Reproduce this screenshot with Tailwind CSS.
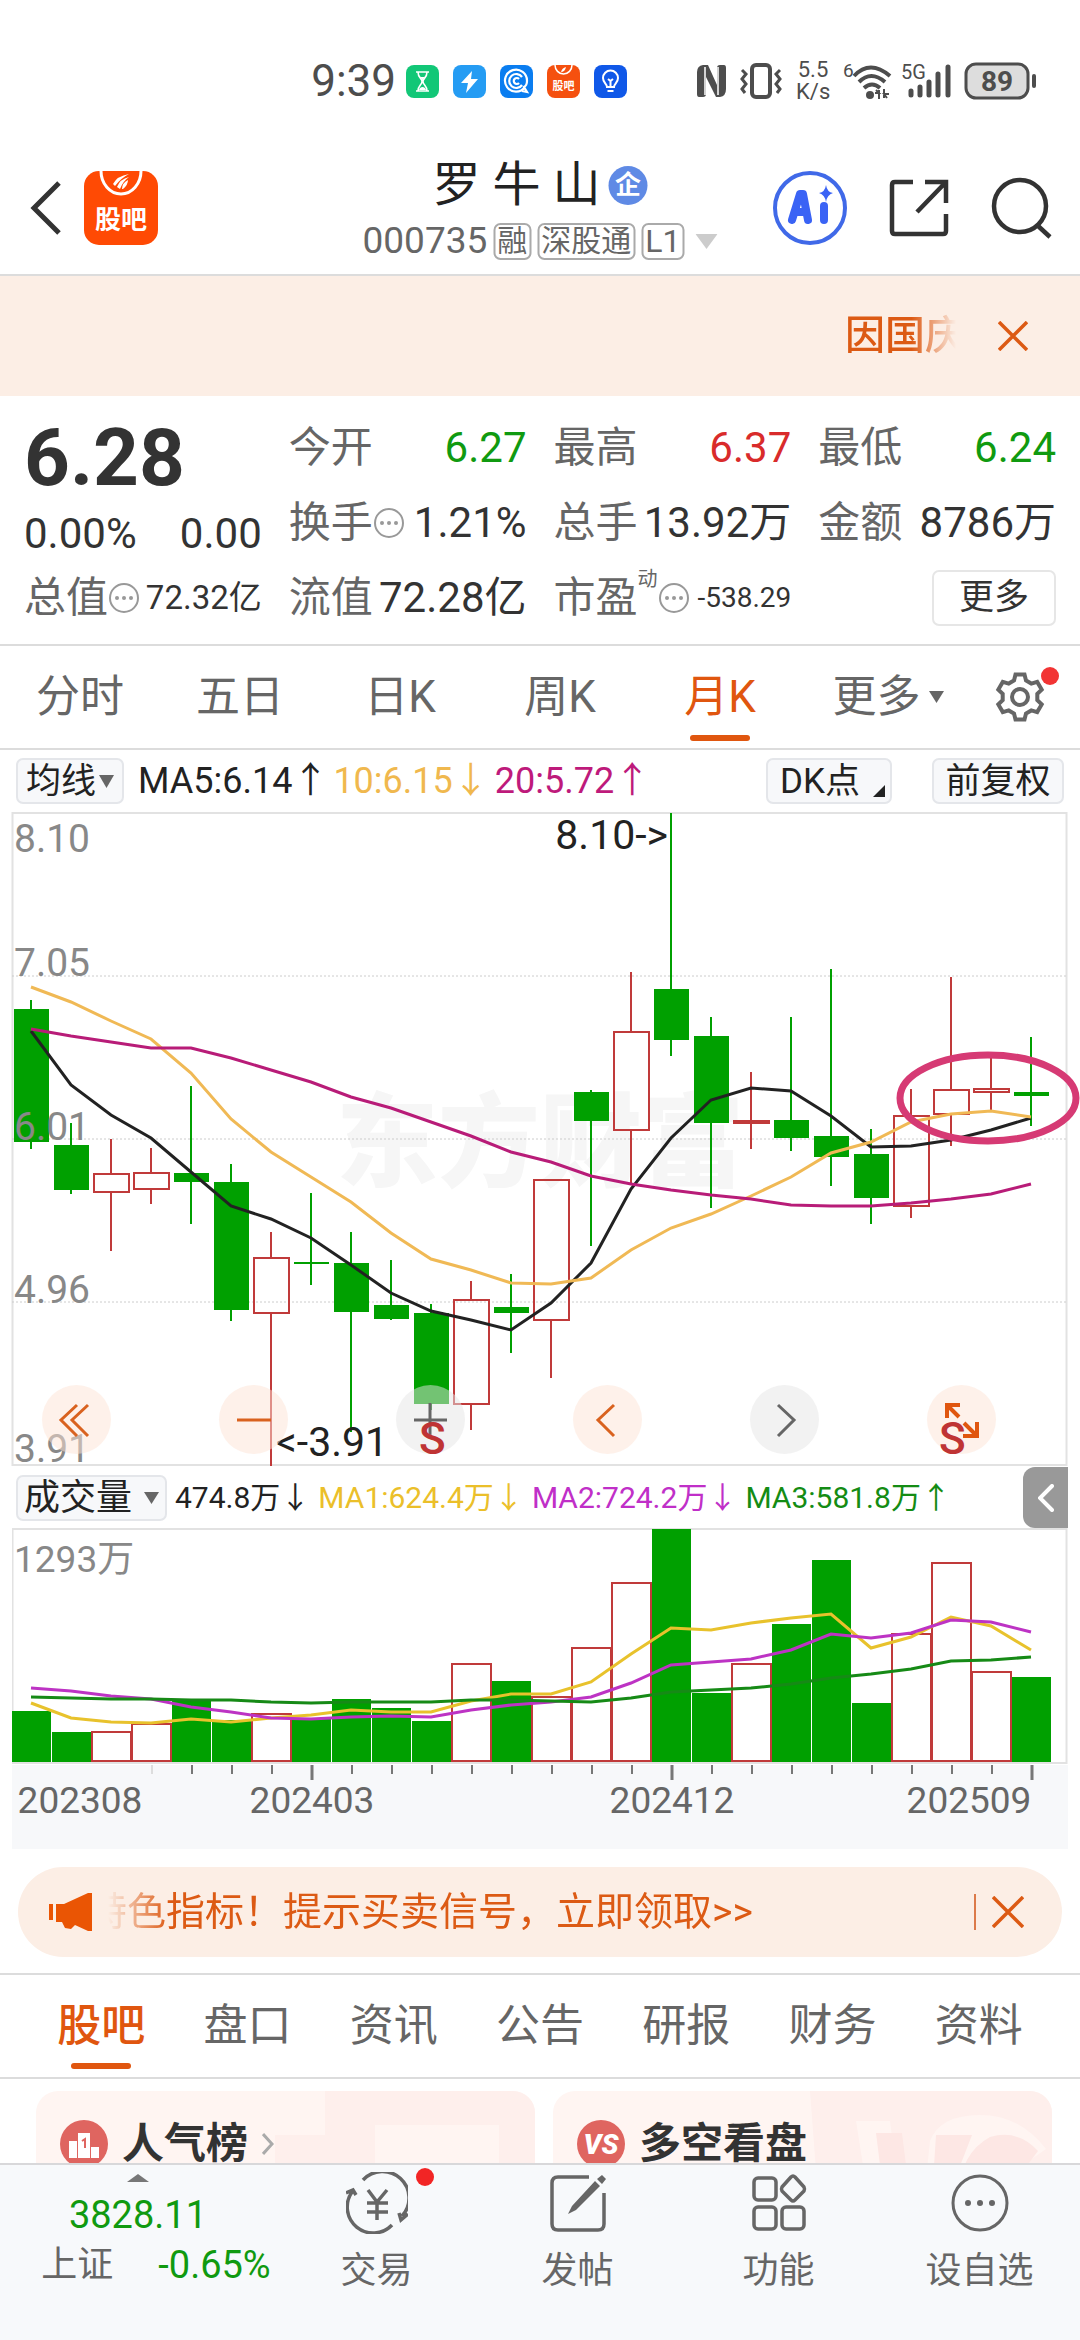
<!DOCTYPE html>
<html lang="zh-CN">
<head>
    <meta charset="UTF-8">
    <meta name="viewport" content="width=device-width, initial-scale=1.0">
    <title>罗牛山 000735</title>
    <script src="https://cdn.jsdelivr.net/npm/@tailwindcss/browser@4"></script>
</head>
<body class="bg-white font-['Roboto','Noto_Sans_CJK_SC',sans-serif] text-[#333] leading-none min-h-screen overflow-x-hidden">

    <!-- Status bar -->
    <div class="flex items-center justify-end h-[134px] pt-7 pr-[43px] text-[#4d4d4d]">
        <span class="text-[44px] mr-[10px]">9:39</span>
        <div class="flex gap-[14px]">
            <svg class="size-[33px]" viewBox="0 0 33 33"><rect width="33" height="33" rx="8" fill="#12c777"/><path d="M10 7h13M10 26h13M12 7c0 6 4 6 4 9.500s-4 4-4 9.500M21 7c0 6-4 6-4 9.500s4 4 4 9.500" fill="none" stroke="#fff" stroke-width="1.600"/><path d="M14 12h5l-2.500 3zM13 25c1-4 6-4 7 0z" fill="#fff"/></svg>
            <svg class="size-[33px]" viewBox="0 0 33 33"><rect width="33" height="33" rx="8" fill="#259cf3"/><path d="M19 6L8 18h7l-2 10 12-14h-7z" fill="#fff"/></svg>
            <svg class="size-[33px]" viewBox="0 0 33 33"><rect width="33" height="33" rx="8" fill="#0a7df0"/><g fill="none" stroke="#fff" stroke-width="2.200"><path d="M25 22a11 11 0 1 1 2-6c0 4-1 5-3 6l3 5-5-1"/><path d="M22 12a7 7 0 1 0 0 8"/><path d="M19 14a3 3 0 1 0 0 4"/></g></svg>
            <svg class="size-[33px]" viewBox="0 0 33 33"><rect width="33" height="33" rx="8" fill="#f5500f"/><path d="M8 0a8.500 9 0 0 0 17 0" fill="none" stroke="#fff" stroke-width="1.500"/><path d="M14 7q1-4 5-5-1 5-5 5z" fill="#fff"/><text x="16.500" y="25" font-size="11" font-weight="700" fill="#fff" text-anchor="middle">股吧</text></svg>
            <svg class="size-[33px]" viewBox="0 0 33 33"><rect width="33" height="33" rx="8" fill="#1058e8"/><path d="M13 22c0-3-4-4-4-9a7.500 7.500 0 0 1 15 0c0 5-4 6-4 9zM13.500 26h6M16.500 22v-6M14 14l2.500 2 2.500-2" fill="none" stroke="#fff" stroke-width="2"/></svg>
        </div>
        <svg class="w-[31px] h-[34px] ml-[69px]" viewBox="0 0 31 34"><path d="M7 1h5l9 20V4q0-3 3-3h4q2 0 2 3v21q0 7-6 8h-4L10 13v17q0 3-3 3H3q-2 0-2-3V8q0-6 6-7z" fill="#4d4d4d"/><path d="M9 3v28M22 3v28" stroke="#fff" stroke-width="1.500"/></svg>
        <svg class="w-[42px] h-[36px] ml-[13px]" viewBox="0 0 42 36" fill="none" stroke="#4d4d4d" stroke-width="3"><rect x="12" y="2" width="18" height="32" rx="4" stroke-width="4"/><path d="M2 7l4 4-4 5 4 5-4 5 3 4M40 7l-4 4 4 5-4 5 4 5-3 4"/></svg>
        <span class="w-[34px] ml-[14px] text-[22px] leading-[22px] text-center">5.5<br>K/s</span>
        <svg class="w-[48px] h-[38px] ml-[13px] overflow-visible" viewBox="0 0 48 38" fill="none" stroke="#4d4d4d" stroke-width="4"><text x="0" y="15" font-size="19" fill="#4d4d4d" stroke="none">6</text><path d="M11 14q16-17 36 0M16 20q12-12 26 0M21 26q8-7 16 0"/><circle cx="27" cy="33" r="4" fill="#4d4d4d" stroke="none"/><path d="M32 31h4l-3-3M46 32h-5l3 4M36 28v9M41 27v9" stroke-width="2"/></svg>
        <svg class="w-[51px] h-[38px] ml-[10px] overflow-visible" viewBox="0 0 51 38" stroke="#4d4d4d" stroke-width="5" stroke-linecap="round"><text x="0" y="17" font-size="20" fill="#4d4d4d" stroke="none">5G</text><path d="M10 33v-4M19 33v-8M28 33V20M37 33V12M47 33V5"/></svg>
        <svg class="w-[73px] h-[38px] ml-[12px]" viewBox="0 0 73 38"><rect x="2" y="2" width="62" height="34" rx="10" fill="#ddd" stroke="#4d4d4d" stroke-width="3"/><path d="M70 14v10" stroke="#4d4d4d" stroke-width="4" stroke-linecap="round"/><text x="33" y="29" font-size="28" font-weight="700" fill="#4d4d4d" text-anchor="middle">89</text></svg>
    </div>

    <!-- Header -->
    <header class="relative flex items-center justify-between h-[142px] pl-[30px] pr-[27px] pt-[8px] border-b-2 border-[#dcdcdc]">
        <div class="flex items-center gap-[22px]">
            <button aria-label="返回"><svg class="w-[32px] h-[56px]" viewBox="0 0 32 56" fill="none" stroke="#333" stroke-width="5"><path d="M29 3L4 28l25 25"/></svg></button>
            <a href="#guba" aria-label="股吧">
                <svg class="w-[74px] h-[74px]" viewBox="0 0 74 74"><rect width="74" height="74" rx="15" fill="#ff4a04"/><path d="M17 0a20 23 0 0 0 40 0" fill="none" stroke="#fff" stroke-width="3"/><path d="M29 13Q33 5 45 3q-8 4-14 12zM33 16Q36 8 45 6q-6 4-9 12zM38 18q0-6 6-9 0 5-5 9z" fill="#fff"/><text x="37" y="58" font-size="26" font-weight="700" fill="#fff" text-anchor="middle">股吧</text></svg>
            </a>
        </div>
        <div class="absolute left-1/2 -translate-x-1/2 top-[25px] flex flex-col items-center gap-[11px] whitespace-nowrap">
            <h1 class="flex items-center text-[48px] leading-[52px] text-[#222] gap-[8px]">罗 牛 山<span class="flex items-center justify-center size-[39px] rounded-full bg-[#5f8ae5] text-white text-[26px] font-bold leading-none">企</span></h1>
            <div class="flex items-center gap-[6px] text-[#666] text-[37px] leading-[38px]">
                <span>000735</span>
                <span class="border-2 border-[#aaa] rounded-[7px] px-[2px] h-[37px] text-[30px] leading-[32px]">融</span>
                <span class="border-2 border-[#aaa] rounded-[7px] px-[2px] h-[37px] text-[30px] leading-[32px]">深股通</span>
                <span class="border-2 border-[#aaa] rounded-[7px] px-[2px] h-[37px] text-[32px] leading-[33px]">L1</span>
                <svg class="w-[22px] h-[15px] ml-[5px]" viewBox="0 0 22 15"><path d="M0 0h22L11 15z" fill="#ccc"/></svg>
            </div>
        </div>
        <div class="flex items-center gap-[42px]">
            <button aria-label="AI"><svg class="size-[74px]" viewBox="0 0 74 74"><circle cx="37" cy="37" r="35" fill="#fff" stroke="#4069e8" stroke-width="4"/><g fill="none" stroke="#3a63f5" stroke-linecap="round" stroke-linejoin="round" stroke-width="8"><path d="M19 49l8-26h3l5 26M22 41h11"/><path d="M51 35v14"/></g><path d="M53 14q1 7 7 8-6 2-7 9-1-7-7-9 6-1 7-8z" fill="#3a63f5"/></svg></button>
            <button aria-label="分享"><svg class="size-[60px]" viewBox="0 0 60 60" fill="none" stroke="#333" stroke-width="4.500"><path d="M24 4H6q-3 0-3 3v46q0 3 3 3h48q3 0 3-3V36M36 4h21v21M57 4L28 34"/></svg></button>
            <button aria-label="搜索"><svg class="size-[62px]" viewBox="0 0 62 62" fill="none" stroke="#333" stroke-width="4.500"><circle cx="29" cy="29" r="26"/><path d="M46 48l13 12"/></svg></button>
        </div>
    </header>

    <!-- Notice -->
    <div class="flex items-center justify-end gap-[42px] h-[120px] bg-[#fceee5] pr-[52px] text-[#dc5a14]">
        <p class="w-[111px] overflow-hidden whitespace-nowrap text-[40px] leading-[48px] font-medium mask-r-from-60% mask-r-to-100%">因国庆</p>
        <button aria-label="关闭"><svg class="w-[30px] h-[30px]" viewBox="0 0 30 30" stroke="currentColor" stroke-width="3.500"><path d="M1 1l28 28M29 1L1 29"/></svg></button>
    </div>

    <!-- Quote -->
    <section class="grid grid-cols-4 auto-rows-[75px] items-center gap-x-[27px] pl-[24px] pr-[24px] pt-[14px] pb-[9px] border-b-2 border-[#dcdcdc] text-[42px] whitespace-nowrap">
        <div class="row-span-2 flex flex-col justify-between h-[140px]">
            <strong class="text-[80px] leading-[86px]">6.28</strong>
            <div class="flex justify-between"><span>0.00%</span><span>0.00</span></div>
        </div>
        <div class="flex items-center justify-between"><span class="text-[#666]">今开</span><span class="text-[#109a10]">6.27</span></div>
        <div class="flex items-center justify-between"><span class="text-[#666]">最高</span><span class="text-[#d92b2b]">6.37</span></div>
        <div class="flex items-center justify-between"><span class="text-[#666]">最低</span><span class="text-[#109a10]">6.24</span></div>
        <div class="flex items-center justify-between"><span class="flex items-center text-[#666]">换手<svg class="size-[32px]" viewBox="0 0 32 32" fill="#999"><circle cx="16" cy="16" r="14" fill="none" stroke="#999" stroke-width="2"/><circle cx="9" cy="16" r="2"/><circle cx="16" cy="16" r="2"/><circle cx="23" cy="16" r="2"/></svg></span><span>1.21%</span></div>
        <div class="flex items-center justify-between"><span class="text-[#666]">总手</span><span>13.92万</span></div>
        <div class="flex items-center justify-between"><span class="text-[#666]">金额</span><span>8786万</span></div>
        <div class="flex items-center justify-between"><span class="flex items-center text-[#666]">总值<svg class="size-[32px]" viewBox="0 0 32 32" fill="#999"><circle cx="16" cy="16" r="14" fill="none" stroke="#999" stroke-width="2"/><circle cx="9" cy="16" r="2"/><circle cx="16" cy="16" r="2"/><circle cx="23" cy="16" r="2"/></svg></span><span class="text-[33px]">72.32亿</span></div>
        <div class="flex items-center justify-between"><span class="text-[#666]">流值</span><span>72.28亿</span></div>
        <div class="flex items-center justify-between"><span class="flex items-center text-[#666]">市盈<span class="text-[20px] self-start -mt-2">动</span><svg class="size-[32px]" viewBox="0 0 32 32" fill="#999"><circle cx="16" cy="16" r="14" fill="none" stroke="#999" stroke-width="2"/><circle cx="9" cy="16" r="2"/><circle cx="16" cy="16" r="2"/><circle cx="23" cy="16" r="2"/></svg></span><span class="text-[28px]">-538.29</span></div>
        <button class="justify-self-end w-[124px] h-[56px] border-2 border-[#e6e6e6] rounded-[7px] text-[35px]">更多</button>
    </section>

    <!-- Period tabs -->
    <nav class="flex h-[104px] border-b-2 border-[#dcdcdc] text-[44px] text-[#666]">
        <a href="#m" class="flex-1 flex items-center justify-center">分时</a>
        <a href="#5d" class="flex-1 flex items-center justify-center">五日</a>
        <a href="#d" class="flex-1 flex items-center justify-center">日K</a>
        <a href="#w" class="flex-1 flex items-center justify-center">周K</a>
        <a href="#mk" class="relative flex-1 flex items-center justify-center text-[#e0560f]">月K<span class="absolute bottom-[7px] w-[60px] h-[6px] rounded-full bg-[#e0560f]"></span></a>
        <a href="#more" class="flex-1 flex items-center justify-center"><span class="flex items-center gap-[8px] ml-[16px]">更多<svg class="w-[15px] h-[12px]" viewBox="0 0 15 12"><path d="M0 0h15L7.500 12z" fill="#666"/></svg></span></a>
        <button aria-label="设置" class="relative w-[120px] flex items-center justify-center">
            <svg class="size-[52px]" viewBox="-26 -26 52 52" fill="none" stroke="#666" stroke-width="4"><path d="M-6-16.500L-4.500-22.500H4.500L6-16.500 11.300-13.400 17.200-15.100 21.700-7.400 17.300-3.100V3.100L21.700 7.400 17.200 15.100 11.300 13.400 6 16.500 4.500 22.500H-4.500L-6 16.500-11.300 13.400-17.200 15.100-21.700 7.400-17.300 3.100V-3.100L-21.700-7.400-17.200-15.100-11.300-13.400z"/><circle r="8"/></svg>
            <span class="absolute top-[21px] right-[21px] size-[18px] rounded-full bg-[#f23434]"></span>
        </button>
    </nav>

    <!-- MA row -->
    <div class="flex items-center h-[62px] px-[16px] text-[36px] text-[#222] whitespace-nowrap">
        <button class="flex items-center gap-[3px] h-[46px] px-[8px] mr-[14px] border-2 border-[#e4e6ea] rounded-[7px] bg-[#f7f8fa] text-[35px]">均线<svg class="w-[15px] h-[13px]" viewBox="0 0 15 13"><path d="M0 0h15L7.500 13z" fill="#666"/></svg></button>
        <span>MA5:6.14↑</span>
        <span class="text-[#f0b84e] ml-[5px]">10:6.15↓</span>
        <span class="text-[#be1a7b] ml-[6px]">20:5.72↑</span>
        <button class="relative flex items-center h-[46px] w-[126px] pl-[12px] ml-auto mr-[40px] border-2 border-[#e4e6ea] rounded-[7px] bg-[#f7f8fa] text-[35px]">DK点<svg class="absolute right-[5px] bottom-[5px] size-[12px]" viewBox="0 0 12 12"><path d="M12 0v12H0z" fill="#222"/></svg></button>
        <button class="h-[46px] w-[132px] border-2 border-[#e4e6ea] rounded-[7px] bg-[#f7f8fa] text-[35px]">前复权</button>
    </div>

    <!-- K line chart -->
    <div class="relative px-[12px]">
        <svg id="kline" class="block w-full overflow-visible" viewBox="12 812 1056 655"></svg>
        <div class="absolute left-[42px] right-[84px] bottom-[13px] flex justify-between">
            <button aria-label="最左" class="size-[69px] rounded-full bg-[#fde3d5]/50"><svg viewBox="0 0 69 69" fill="none" stroke="#d9621f" stroke-width="3"><path d="M35 20L19 35l16 16M46 20L30 35l16 16"/></svg></button>
            <button aria-label="缩小" class="size-[69px] rounded-full bg-[#fde3d5]/50"><svg viewBox="0 0 69 69" fill="none" stroke="#d9621f" stroke-width="3"><path d="M18 35h34"/></svg></button>
            <button aria-label="放大" class="size-[69px] rounded-full bg-[#e6e6e6]/50"><svg viewBox="0 0 69 69" fill="none" stroke="#666" stroke-width="3"><path d="M18 35h33M34 18v34"/></svg></button>
            <button aria-label="左移" class="size-[69px] rounded-full bg-[#fde3d5]/50"><svg viewBox="0 0 69 69" fill="none" stroke="#d9621f" stroke-width="3"><path d="M41 20L25 35l16 16"/></svg></button>
            <button aria-label="右移" class="size-[69px] rounded-full bg-[#e6e6e6]/50"><svg viewBox="0 0 69 69" fill="none" stroke="#666" stroke-width="3"><path d="M28 20l16 15-16 16"/></svg></button>
            <button aria-label="全屏" class="size-[69px] rounded-full bg-[#fde3d5]/50"><svg viewBox="0 0 69 69" fill="none" stroke="#e0560f" stroke-width="4"><path d="M20 33V20h13M21 21l11 11M36 51h14V37M37 38l12 12"/></svg></button>
        </div>
        <!-- sell marks -->
        <span class="absolute left-[419px] bottom-[6px] text-[44px] font-medium text-[#bf3434]">S</span>
        <span class="absolute left-[939px] bottom-[6px] text-[44px] font-medium text-[#bf3434]">S</span>
    </div>

    <!-- Volume row -->
    <div class="flex items-center h-[61px] pl-[16px] pr-[12px] gap-[8px] text-[30px] text-[#222] whitespace-nowrap">
        <button class="flex items-center justify-between h-[46px] w-[151px] px-[6px] border-2 border-[#e4e6ea] rounded-[7px] bg-[#f7f8fa] text-[36px]">成交量<svg class="w-[15px] h-[12px]" viewBox="0 0 15 12"><path d="M0 0h15L7.500 12z" fill="#666"/></svg></button>
        <span>474.8万↓</span>
        <span class="text-[#ebbf2a]">MA1:624.4万↓</span>
        <span class="text-[#c02fc8]">MA2:724.2万↓</span>
        <span class="text-[#148c14]">MA3:581.8万↑</span>
        <button aria-label="展开" class="flex items-center justify-center w-[45px] h-[61px] ml-auto rounded-l-[12px] bg-[#999]"><svg class="w-[16px] h-[28px]" viewBox="0 0 16 28" fill="none" stroke="#fff" stroke-width="4" stroke-linecap="round"><path d="M14 2L2 14l12 12"/></svg></button>
    </div>

    <!-- Volume chart -->
    <div class="px-[12px]">
        <svg id="volume" class="block w-full" viewBox="12 1528 1056 321"></svg>
    </div>

    <!-- Promo -->
    <div class="flex items-center h-[90px] mx-[18px] mt-[18px] mb-[16px] pl-[28px] pr-[38px] rounded-full bg-[#fceee5] text-[#dc5a14]">
        <svg class="w-[48px] h-[42px]" viewBox="0 0 48 42" fill="#ea5504"><path d="M3 13h4v16H3zM10 13h8L42 2h4v38h-4l-13-6-4 4-6-1-3-6h-6z"/></svg>
        <p class="flex-1 ml-[14px] overflow-hidden whitespace-nowrap text-[39px] leading-[50px] mask-l-from-93% mask-l-to-100%"><span class="-ml-[20px]">特色指标！提示买卖信号，立即领取&gt;&gt;</span></p>
        <span class="w-[2px] h-[36px] mr-[16px] bg-[#dc7a4a]"></span>
        <button aria-label="关闭"><svg class="size-[32px]" viewBox="0 0 32 32" stroke="currentColor" stroke-width="3.500"><path d="M1 1l30 30M31 1L1 31"/></svg></button>
    </div>

    <!-- Section tabs -->
    <nav class="flex h-[106px] px-[28px] border-y-2 border-[#dcdcdc] text-[44px] text-[#666]">
        <a href="#guba" class="relative flex-1 flex items-center justify-center font-medium text-[#e0560f]">股吧<span class="absolute bottom-[8px] w-[60px] h-[6px] rounded-full bg-[#e0560f]"></span></a>
        <a href="#pankou" class="flex-1 flex items-center justify-center">盘口</a>
        <a href="#zixun" class="flex-1 flex items-center justify-center">资讯</a>
        <a href="#gonggao" class="flex-1 flex items-center justify-center">公告</a>
        <a href="#yanbao" class="flex-1 flex items-center justify-center">研报</a>
        <a href="#caiwu" class="flex-1 flex items-center justify-center">财务</a>
        <a href="#ziliao" class="flex-1 flex items-center justify-center">资料</a>
    </nav>

    <!-- Cards -->
    <div id="guba" class="grid grid-cols-2 gap-[18px] pl-[36px] pr-[28px] pt-[12px] h-[240px] text-[42px] font-bold">
        <a href="#rank" class="relative overflow-hidden flex items-center gap-[14px] h-[106px] pl-[24px] rounded-[22px] bg-[#fff5f2]">
            <svg class="absolute right-0 top-0 h-[106px] w-[260px]" viewBox="0 0 260 106"><path d="M0 106V44h50V0h210v106z" fill="#feefec"/><path d="M100 106V34h124v72z" fill="#fff5f2"/><path d="M124 106V74h76v32z" fill="#fde7e4"/></svg>
            <svg class="relative size-[48px]" viewBox="0 0 48 48"><circle cx="24" cy="24" r="24" fill="#df6560"/><path d="M9 21h8v17H9zM18 13h12v25H18zM31 27h8v11h-8z" fill="#fff"/><path d="M22 21l3-2v9" fill="none" stroke="#df6560" stroke-width="2"/></svg>
            <span class="relative">人气榜</span>
            <svg class="relative w-[12px] h-[22px]" viewBox="0 0 12 22" fill="none" stroke="#aaa" stroke-width="3"><path d="M1 1l9 10-9 10"/></svg>
        </a>
        <a href="#vs" class="relative overflow-hidden flex items-center gap-[14px] h-[106px] pl-[24px] rounded-[22px] bg-[#fff5f2]">
            <svg class="absolute right-0 top-0 h-[106px] w-[242px]" viewBox="0 0 242 106"><path d="M0 0h242v106H8z" fill="#feefec"/><path d="M46 30h34l10 76H58zM120 50q10-26 50-26 40 0 66 34l-20 14q-40-20-52 34h-50z" fill="#fff5f2"/><path d="M66 42h26l8 64H74zM126 44h36l-24 62h-16zM172 106q4-42 44-30l12-16q-20-22-48-14-30 16-32 60z" fill="#fde7e4"/></svg>
            <svg class="relative size-[48px]" viewBox="0 0 48 48"><circle cx="24" cy="24" r="24" fill="#df6560"/><text x="24" y="34" font-size="28" font-weight="900" font-style="italic" fill="#fff" text-anchor="middle">VS</text></svg>
            <span class="relative">多空看盘</span>
        </a>
    </div>

    <!-- Bottom bar -->
    <nav class="fixed inset-x-0 bottom-0 flex h-[177px] border-t-2 border-[#d8d8da] bg-[#f7f9fb] text-[36px] text-[#666]">
        <a href="#index" class="relative w-[276px] flex flex-col items-center gap-[12px] pt-[31px] text-[#109a10] text-[38px]">
            <svg class="absolute top-[9px] w-[22px] h-[8px]" viewBox="0 0 22 8"><path d="M0 8h22L11 0z" fill="#777"/></svg>
            <span>3828.11</span>
            <span class="flex items-center gap-[45px] pl-[36px]"><span class="text-[36px] text-[#666]">上证</span>-0.65%</span>
        </a>
        <a href="#trade" class="relative flex-1 flex flex-col items-center gap-[19px] pt-[7px]">
            <svg class="size-[62px]" viewBox="0 0 62 62" fill="none" stroke="#666" stroke-width="3.500"><path d="M17 8a26 26 0 0 1 39 36M46 53A26 26 0 0 1 6 20M0 21l7-3 3 5M62 42l-7 6-2-7M22 18l9 12 10-12M21 31h21M21 40h21M31 30v18"/></svg>
            交易
            <span class="absolute top-[3px] right-[43px] size-[18px] rounded-full bg-[#f22525]"></span>
        </a>
        <a href="#post" class="flex-1 flex flex-col items-center gap-[19px] pt-[7px]">
            <svg class="size-[62px]" viewBox="0 0 62 62" fill="none" stroke="#666" stroke-width="3.500"><path d="M42 5H11q-6 0-6 6v41q0 6 6 6h40q6 0 6-6V21"/><path d="M50 7l5-4 4 4-4 5zM48 9l5 5L29 38l-8 4 4-8z" fill="#666" stroke="none"/></svg>
            发帖
        </a>
        <a href="#features" class="flex-1 flex flex-col items-center gap-[19px] pt-[7px]">
            <svg class="size-[62px]" viewBox="0 0 62 62" fill="none" stroke="#666" stroke-width="3.500" stroke-linejoin="round"><rect x="6" y="6" width="22" height="22" rx="4"/><rect x="6" y="35" width="22" height="22" rx="4"/><rect x="34" y="35" width="22" height="22" rx="4"/><path d="M45 4q1 0 2 1l9 10q1 2 0 4l-9 9q-2 2-4 0l-9-9q-1-2 0-4l9-10q1-1 2-1z"/></svg>
            功能
        </a>
        <a href="#watch" class="flex-1 flex flex-col items-center gap-[19px] pt-[7px]">
            <svg class="size-[62px]" viewBox="0 0 62 62" fill="#666"><circle cx="31" cy="31" r="27" fill="none" stroke="#666" stroke-width="3"/><circle cx="19" cy="31" r="3"/><circle cx="31" cy="31" r="3"/><circle cx="43" cy="31" r="3"/></svg>
            设自选
        </a>
    </nav>

    <script>
        const GREEN = '#00a000', RED = '#c03a3a';
        // up?, high, body top, body bottom, low
        const candles = [
            [0,1000,1009,1142,1149],[0,1123,1145,1190,1194],[1,1139,1174,1192,1251],[1,1148,1173,1189,1204],
            [0,1086,1173,1182,1224],[0,1164,1182,1310,1321],[1,1232,1258,1313,1466],[0,1193,1262,1264,1285],
            [0,1232,1263,1312,1432],[0,1260,1305,1319,1320],[0,1304,1313,1404,1410],[1,1281,1300,1404,1430],
            [0,1274,1307,1313,1353],[1,1179,1180,1320,1378],[0,1090,1092,1121,1246],[1,972,1032,1130,1184],
            [0,813,989,1040,1056],[0,1017,1036,1123,1208],[1,1072,1121,1123,1149],[0,1017,1120,1138,1151],
            [0,969,1136,1157,1186],[0,1129,1154,1198,1224],[1,1089,1116,1206,1218],[1,977,1090,1114,1146],
            [1,1057,1089,1092,1112],[0,1037,1092,1096,1126]
        ];
        const ma5 = [1031,1085,1115,1138,1172,1206,1219,1238,1265,1293,1311,1320,1330,1303,1263,1189,1138,1100,1088,1091,1116,1147,1146,1140,1130,1118];
        const ma10 = [987,1002,1021,1039,1073,1119,1152,1177,1202,1233,1259,1270,1283,1284,1278,1250,1228,1214,1196,1177,1153,1142,1122,1114,1111,1117];
        const ma20 = [1029,1036,1042,1048,1048,1058,1070,1082,1097,1108,1122,1136,1152,1162,1176,1184,1190,1195,1199,1205,1206,1206,1203,1199,1194,1184];
        const vols = [1711,1732,1732,1724,1700,1720,1714,1718,1699,1708,1721,1664,1681,1697,1648,1583,1529,1693,1664,1624,1560,1703,1634,1563,1672,1677];
        const volUp = [2, 3, 6, 11, 13, 14, 15, 18, 22, 23, 24];
        const vma1 = [1703,1718,1722,1723,1719,1722,1718,1715,1710,1712,1712,1701,1694,1694,1682,1654,1628,1630,1623,1618,1614,1648,1637,1617,1626,1650];
        const vma2 = [1688,1691,1696,1699,1707,1712,1718,1719,1717,1716,1717,1710,1705,1702,1697,1683,1665,1662,1659,1650,1634,1638,1633,1620,1622,1632];
        const vma3 = [1697,1698,1699,1699,1700,1700,1702,1703,1702,1702,1702,1700,1700,1701,1702,1698,1692,1690,1688,1684,1678,1674,1669,1661,1660,1657];

        const cx = i => 31 + i * 40;
        const line = (ys, color) => `<polyline points="${ys.map((y, i) => cx(i) + ',' + y).join(' ')}" fill="none" stroke="${color}" stroke-width="3"/>`;

        function drawKline() {
            let s = `<text x="540" y="1179" font-size="102" font-weight="900" fill="#f6f6f6" text-anchor="middle">东方财富</text>`;
            s += `<rect x="12.500" y="813" width="1054" height="652" fill="none" stroke="#e2e2e2" stroke-width="2"/>`;
            [976, 1139, 1302].forEach(y => {
                s += `<path d="M12 ${y}H1068" stroke="#ccc" stroke-width="1" stroke-dasharray="2 2"/>`;
            });
            candles.forEach(([up, hi, top, bot, lo], i) => {
                const x = cx(i);
                if (up) {
                    s += `<path d="M${x} ${hi}V${top}M${x} ${bot}V${lo}" stroke="${RED}" stroke-width="2"/>`;
                    s += `<rect x="${x - 17}" y="${top}" width="35" height="${bot - top}" fill="none" stroke="${RED}" stroke-width="2"/>`;
                } else {
                    s += `<path d="M${x} ${hi}V${lo}" stroke="${GREEN}" stroke-width="2"/>`;
                    s += `<rect x="${x - 17}" y="${top}" width="35" height="${bot - top}" fill="${GREEN}"/>`;
                }
            });
            s += line(ma5, '#222') + line(ma10, '#f0b955') + line(ma20, '#b81c78');
            [['8.10', 852], ['7.05', 976], ['6.01', 1140], ['4.96', 1303], ['3.91', 1462]].forEach(([t, y]) => {
                s += `<text x="14" y="${y}" font-size="39" fill="#888">${t}</text>`;
            });
            s += `<text x="668" y="849" font-size="41" fill="#222" text-anchor="end">8.10-&gt;</text>`;
            s += `<text x="276" y="1456" font-size="41" fill="#222">&lt;-3.91</text>`;
            s += `<ellipse cx="988" cy="1098" rx="88" ry="43" fill="none" stroke="#d63a74" stroke-width="7"/>`;
            document.getElementById('kline').innerHTML = s;
        }

        function drawVolume() {
            let s = `<rect x="12.500" y="1529" width="1054" height="234" fill="none" stroke="#e2e2e2" stroke-width="2"/>`;
            s += `<rect x="12" y="1765" width="1056" height="84" fill="#f7f8fa"/>`;
            vols.forEach((y, i) => {
                const x = 12 + i * 40;
                s += volUp.includes(i)
                    ? `<rect x="${x}" y="${y}" width="39" height="${1761 - y}" fill="#fff" stroke="${RED}" stroke-width="2"/>`
                    : `<rect x="${x}" y="${y}" width="39" height="${1762 - y}" fill="${GREEN}"/>`;
            });
            s += line(vma1, '#e8c22c') + line(vma2, '#bd33c4') + line(vma3, '#168a16');
            for (let i = 3; i < 26; i++) {
                const major = i % 9 === 7;
                s += `<path d="M${cx(i) + 1} 1765v${major ? 15 : 9}" stroke="${i === 3 ? '#ddd' : '#777'}" stroke-width="${major ? 3 : 2}"/>`;
            }
            s += `<text x="14" y="1572" font-size="37" fill="#888">1293万</text>`;
            [['202308', 80], ['202403', 312], ['202412', 672], ['202509', 969]].forEach(([t, x]) => {
                s += `<text x="${x}" y="1813" font-size="37" fill="#666" text-anchor="middle">${t}</text>`;
            });
            document.getElementById('volume').innerHTML = s;
        }

        drawKline();
        drawVolume();
    </script>
</body>
</html>
